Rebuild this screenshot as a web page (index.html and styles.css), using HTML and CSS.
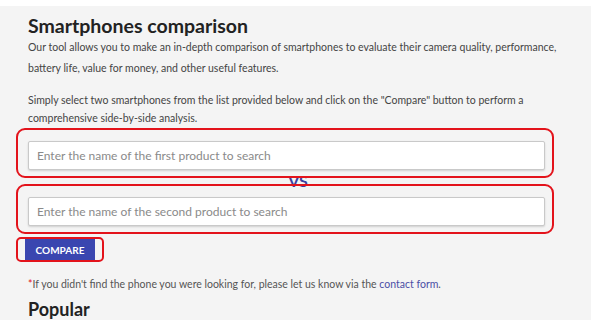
FILE: index.html
```html
<!DOCTYPE html>
<html>
<head>
    <link rel="stylesheet" href="styles.css">
</head>
<body>
    <div id="page">
        <h1>Smartphones comparison</h1>
        <p class="intro">Our tool allows you to make an in-depth comparison of smartphones to evaluate their camera quality, performance, battery life, value for money, and other useful features.</p>
        <p class="intro second">Simply select two smartphones from the list provided below and click on the "Compare" button to perform a comprehensive side-by-side analysis.</p>

        <div class="mark field">
            <input type="text" placeholder="Enter the name of the first product to search">
        </div>
        <div class="vs"><span>VS</span></div>
        <div class="mark field">
            <input type="text" placeholder="Enter the name of the second product to search">
        </div>
        <div class="mark btn-mark">
            <button>COMPARE</button>
        </div>

        <p class="note"><span class="star">*</span>If you didn't find the phone you were looking for, please let us know via the <a href="#">contact form</a>.</p>

        <h2>Popular</h2>
    </div>
</body>
</html>
```

FILE: styles.css
```css
body {
    margin: 0;
    padding-top: 6px;
    background: #fff;
    font-family: Lato, "Open Sans", sans-serif;
    color: #333;
    overflow: hidden;
}

#page {
    width: 563px;
    height: 314px;
    overflow: hidden;
    background: #f4f4f4;
    padding: 9px 0 0 28px;
}

h1 {
    font-size: 19.5px;
    font-weight: 700;
    line-height: 22px;
    margin: 0;
    color: #222;
}

.intro {
    font-size: 10.5px;
    line-height: 21px;
    margin: 0;
    width: 552px;
    color: #444;
}

.intro.second {
    margin-top: 12px;
    line-height: 18px;
}

.mark {
    position: relative;
    z-index: 1;
    border: 2px solid #e3131b;
    border-radius: 9px;
    margin-left: -12px;
}

.field {
    width: 517px;
    padding: 11px 7px 6px 10px;
    margin-top: 1px;
}

.field + .vs + .field {
    margin-top: 0;
}

input {
    display: block;
    box-sizing: border-box;
    width: 517px;
    height: 29px;
    border: 1px solid #c9c9c9;
    border-radius: 2px;
    box-shadow: 0 1px 2px rgba(0,0,0,0.15);
    background: #fff;
    padding: 0 8px;
    font-family: Lato, sans-serif;
    font-size: 12px;
}

input::placeholder {
    color: #8a8a8a;
}

.vs {
    height: 6px;
    width: 540px;
    display: flex;
    justify-content: center;
    align-items: center;
}

.vs span {
    font-size: 16px;
    font-weight: 700;
    color: #3d3f9e;
    line-height: 6px;
}

.btn-mark {
    display: inline-block;
    border-radius: 5px;
    padding: 0 7px;
    margin-top: 3px;
    height: 21px;
}

button {
    display: block;
    height: 21px;
    width: 70px;
    border: none;
    background: #3a46b0;
    color: #fff;
    font-family: Lato, sans-serif;
    font-size: 10px;
    font-weight: 700;
    padding: 0;
    cursor: pointer;
}

.note {
    font-size: 10.5px;
    color: #555;
    margin: 14px 0 0 0;
    line-height: 16px;
}

.star {
    color: #e3131b;
}

.note a {
    color: #4a4ea5;
    text-decoration: none;
}

h2 {
    font-size: 18px;
    font-weight: 700;
    margin: 5px 0 0 0;
    color: #222;
    line-height: 24px;
}
```
